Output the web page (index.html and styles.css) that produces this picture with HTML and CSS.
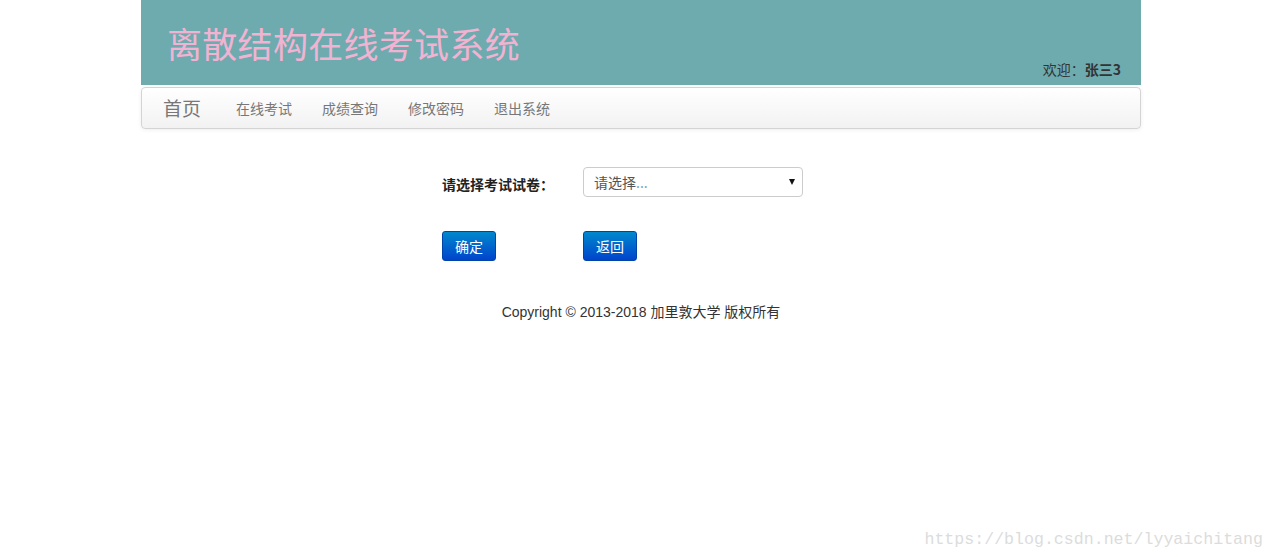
FILE: index.html
```html
<!DOCTYPE html>
<html lang="zh">
<head>
<meta charset="utf-8">
<title>离散结构在线考试系统</title>
<link rel="stylesheet" href="styles.css">
</head>
<body>
<div class="container">
  <header class="header">
    <h1 class="title">离散结构在线考试系统</h1>
    <div class="welcome">欢迎：<b>张三3</b></div>
  </header>
  <nav class="navbar">
    <a class="brand" href="#">首页</a>
    <ul class="nav">
      <li><a href="#">在线考试</a></li>
      <li><a href="#">成绩查询</a></li>
      <li><a href="#">修改密码</a></li>
      <li><a href="#">退出系统</a></li>
    </ul>
  </nav>
  <form class="exam-form">
    <div class="row">
      <label class="label">请选择考试试卷：</label>
      <div class="select">
        <span class="placeholder">请选择<span class="dots">...</span></span>
        <span class="arrow"></span>
      </div>
    </div>
    <div class="row buttons">
      <div class="cell"><button type="button" class="btn">确定</button></div>
      <div class="cell"><button type="button" class="btn">返回</button></div>
    </div>
  </form>
  <footer class="footer">Copyright © 2013-2018 加里敦大学 版权所有</footer>
</div>
<div class="watermark">https://blog.csdn.net/lyyaichitang</div>
</body>
</html>
```

FILE: styles.css
```css
html, body {
  margin: 0;
  padding: 0;
  background: #fff;
  font-family: "Liberation Sans", "Noto Sans CJK SC", sans-serif;
  font-size: 14px;
  color: #333;
}
body {
  padding-left: 8px;
}
.container {
  width: 1000px;
  margin: 0 auto;
}
.header {
  height: 85px;
  background: #6eabaf;
  display: flex;
  justify-content: space-between;
  align-items: flex-end;
  padding: 0 20px 0 26px;
  box-sizing: border-box;
}
.title {
  margin: 0 0 22px 0;
  font-family: "Noto Sans CJK SC", sans-serif;
  font-weight: 400;
  font-size: 35px;
  line-height: 40px;
  color: #f2b3d2;
  letter-spacing: 0.3px;
}
.welcome {
  font-family: "Noto Sans CJK SC", sans-serif;
  font-size: 14px;
  line-height: 20px;
  margin-bottom: 6px;
  color: #333;
}
.welcome b { font-weight: 700; }
.navbar {
  margin-top: 2px;
  height: 42px;
  box-sizing: border-box;
  border: 1px solid #d4d4d4;
  border-radius: 4px;
  background: linear-gradient(#ffffff, #f2f2f2);
  box-shadow: 0 1px 4px rgba(0,0,0,0.065);
  display: flex;
  align-items: center;
  padding: 0 20px;
}
.brand {
  font-family: "Noto Sans CJK SC", sans-serif;
  font-size: 19px;
  color: #777;
  text-decoration: none;
  margin-left: 1px;
  margin-right: 21px;
  line-height: 40px;
}
.nav {
  list-style: none;
  margin: 0;
  padding: 0;
  display: flex;
}
.nav a {
  display: block;
  padding: 0 14px 0 14px;
  margin-right: 2px;
  font-family: "Noto Sans CJK SC", sans-serif;
  font-size: 14px;
  color: #777;
  text-decoration: none;
  line-height: 40px;
}
.exam-form {
  margin: 38px 0 0 301px;
}
.row {
  display: flex;
  align-items: center;
  height: 30px;
}
.label {
  width: 141px;
  font-family: "Noto Sans CJK SC", sans-serif;
  font-weight: 700;
  font-size: 14px;
  color: #222;
  padding-top: 3px;
}
.select {
  width: 220px;
  height: 30px;
  box-sizing: border-box;
  border: 1px solid #ccc;
  border-radius: 4px;
  background: #fff;
  display: flex;
  align-items: center;
  justify-content: space-between;
  padding: 0 7px 0 10px;
}
.placeholder {
  font-family: "Noto Sans CJK SC", sans-serif;
  font-size: 14px;
  color: #555;
}
.dots { color: #7aa9c6; }
.arrow {
  width: 0;
  height: 0;
  border-left: 3.5px solid transparent;
  border-right: 3.5px solid transparent;
  border-top: 6px solid #111;
}
.buttons {
  margin-top: 34px;
}
.cell { width: 141px; }
.btn {
  width: 54px;
  height: 30px;
  border: 1px solid #0044a8;
  border-radius: 3px;
  background: linear-gradient(#0088cc, #0044cc);
  color: #fff;
  font-family: "Noto Sans CJK SC", sans-serif;
  font-size: 14px;
  padding: 0;
  line-height: 28px;
}
.footer {
  margin-top: 41px;
  text-align: center;
  font-size: 14px;
  line-height: 20px;
  color: #333;
}
.watermark {
  position: absolute;
  right: 11px;
  bottom: 8px;
  font-family: "Liberation Mono", monospace;
  font-size: 16.6px;
  color: #dcdcdc;
}
```
